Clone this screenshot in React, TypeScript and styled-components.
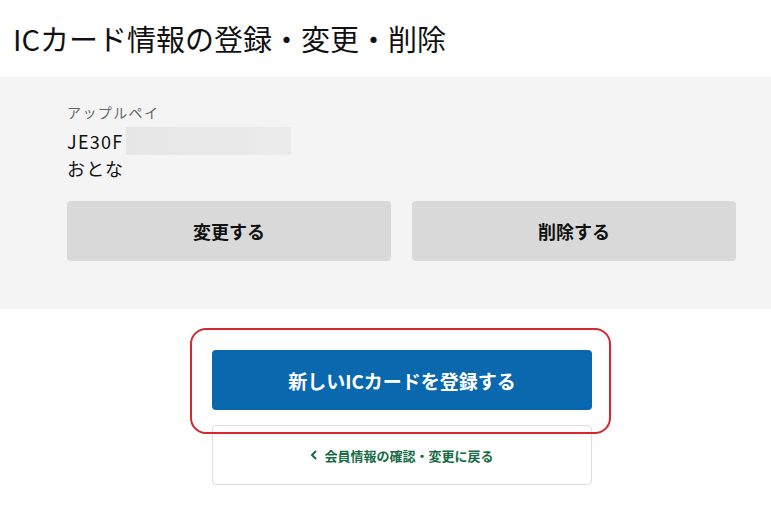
import React from "react";
import styled, { createGlobalStyle } from "styled-components";

const GlobalStyle = createGlobalStyle`
  html, body {
    margin: 0;
    padding: 0;
    background: #ffffff;
  }
  body {
    font-family: "Noto Sans CJK JP", "Noto Sans", sans-serif;
    color: #111111;
  }
  * { box-sizing: border-box; }
`;

const Page = styled.div`
  width: 771px;
  min-height: 517px;
  background: #ffffff;
`;

const Header = styled.header`
  height: 77px;
  display: flex;
  align-items: center;
  padding: 0 0 0 13px;
`;

const Title = styled.h1`
  margin: 0;
  font-size: 29px;
  font-weight: 400;
  line-height: 1.2;
  color: #111111;
`;

const CardPanel = styled.section`
  background: #f4f4f4;
  padding: 25px 35px 48px 67px;
  display: flex;
  flex-direction: column;
`;

const CardType = styled.div`
  font-size: 14px;
  line-height: 20px;
  letter-spacing: 0.1em;
  color: #666666;
  margin-bottom: 5px;
`;

const CardLine = styled.div`
  display: flex;
  align-items: center;
  font-size: 18px;
  line-height: 27px;
  letter-spacing: 0.07em;
  color: #111111;
`;

const Redacted = styled.span`
  display: inline-block;
  width: 165px;
  height: 28px;
  margin-left: 3px;
  background: linear-gradient(90deg, #e6e6e6 0%, #e9e9e9 70%, #ececec 100%);
`;

const ActionRow = styled.div`
  display: grid;
  grid-template-columns: 1fr 1fr;
  gap: 21px;
  margin-top: 19px;
`;

const GrayButton = styled.button`
  height: 60px;
  border: none;
  border-radius: 4px;
  background: #d9d9d9;
  font-family: inherit;
  font-size: 18px;
  font-weight: 700;
  color: #111111;
  cursor: pointer;
`;

const BottomArea = styled.div`
  padding: 41px 0 0 212px;
  display: flex;
  flex-direction: column;
  gap: 15px;
  width: 592px;
`;

const Highlight = styled.div`
  position: relative;
`;

const RedFrame = styled.div`
  position: absolute;
  top: -22px;
  left: -22px;
  right: -19px;
  bottom: -24px;
  border: 2.5px solid #d6262e;
  border-radius: 16px;
  pointer-events: none;
`;

const PrimaryButton = styled.button`
  width: 100%;
  height: 60px;
  border: none;
  border-radius: 4px;
  background: #0968ae;
  color: #ffffff;
  font-family: inherit;
  font-size: 19px;
  font-weight: 700;
  cursor: pointer;
`;

const BackButton = styled.button`
  width: 100%;
  height: 60px;
  border: 1px solid #dddddd;
  border-radius: 4px;
  background: #ffffff;
  color: #156b43;
  font-family: inherit;
  font-size: 13px;
  font-weight: 700;
  display: flex;
  align-items: center;
  justify-content: center;
  gap: 6px;
  cursor: pointer;
`;

const Chevron = styled.svg`
  width: 8px;
  height: 10px;
`;

export default function App() {
  return (
    <Page>
      <GlobalStyle />
      <Header>
        <Title>ICカード情報の登録・変更・削除</Title>
      </Header>
      <CardPanel>
        <CardType>アップルペイ</CardType>
        <CardLine>
          JE30F<Redacted />
        </CardLine>
        <CardLine>おとな</CardLine>
        <ActionRow>
          <GrayButton>変更する</GrayButton>
          <GrayButton>削除する</GrayButton>
        </ActionRow>
      </CardPanel>
      <BottomArea>
        <Highlight>
          <PrimaryButton>新しいICカードを登録する</PrimaryButton>
          <RedFrame />
        </Highlight>
        <BackButton>
          <Chevron viewBox="0 0 8 10">
            <path d="M6 1 L2 5 L6 9" fill="none" stroke="#156b43" strokeWidth="2" />
          </Chevron>
          会員情報の確認・変更に戻る
        </BackButton>
      </BottomArea>
    </Page>
  );
}
